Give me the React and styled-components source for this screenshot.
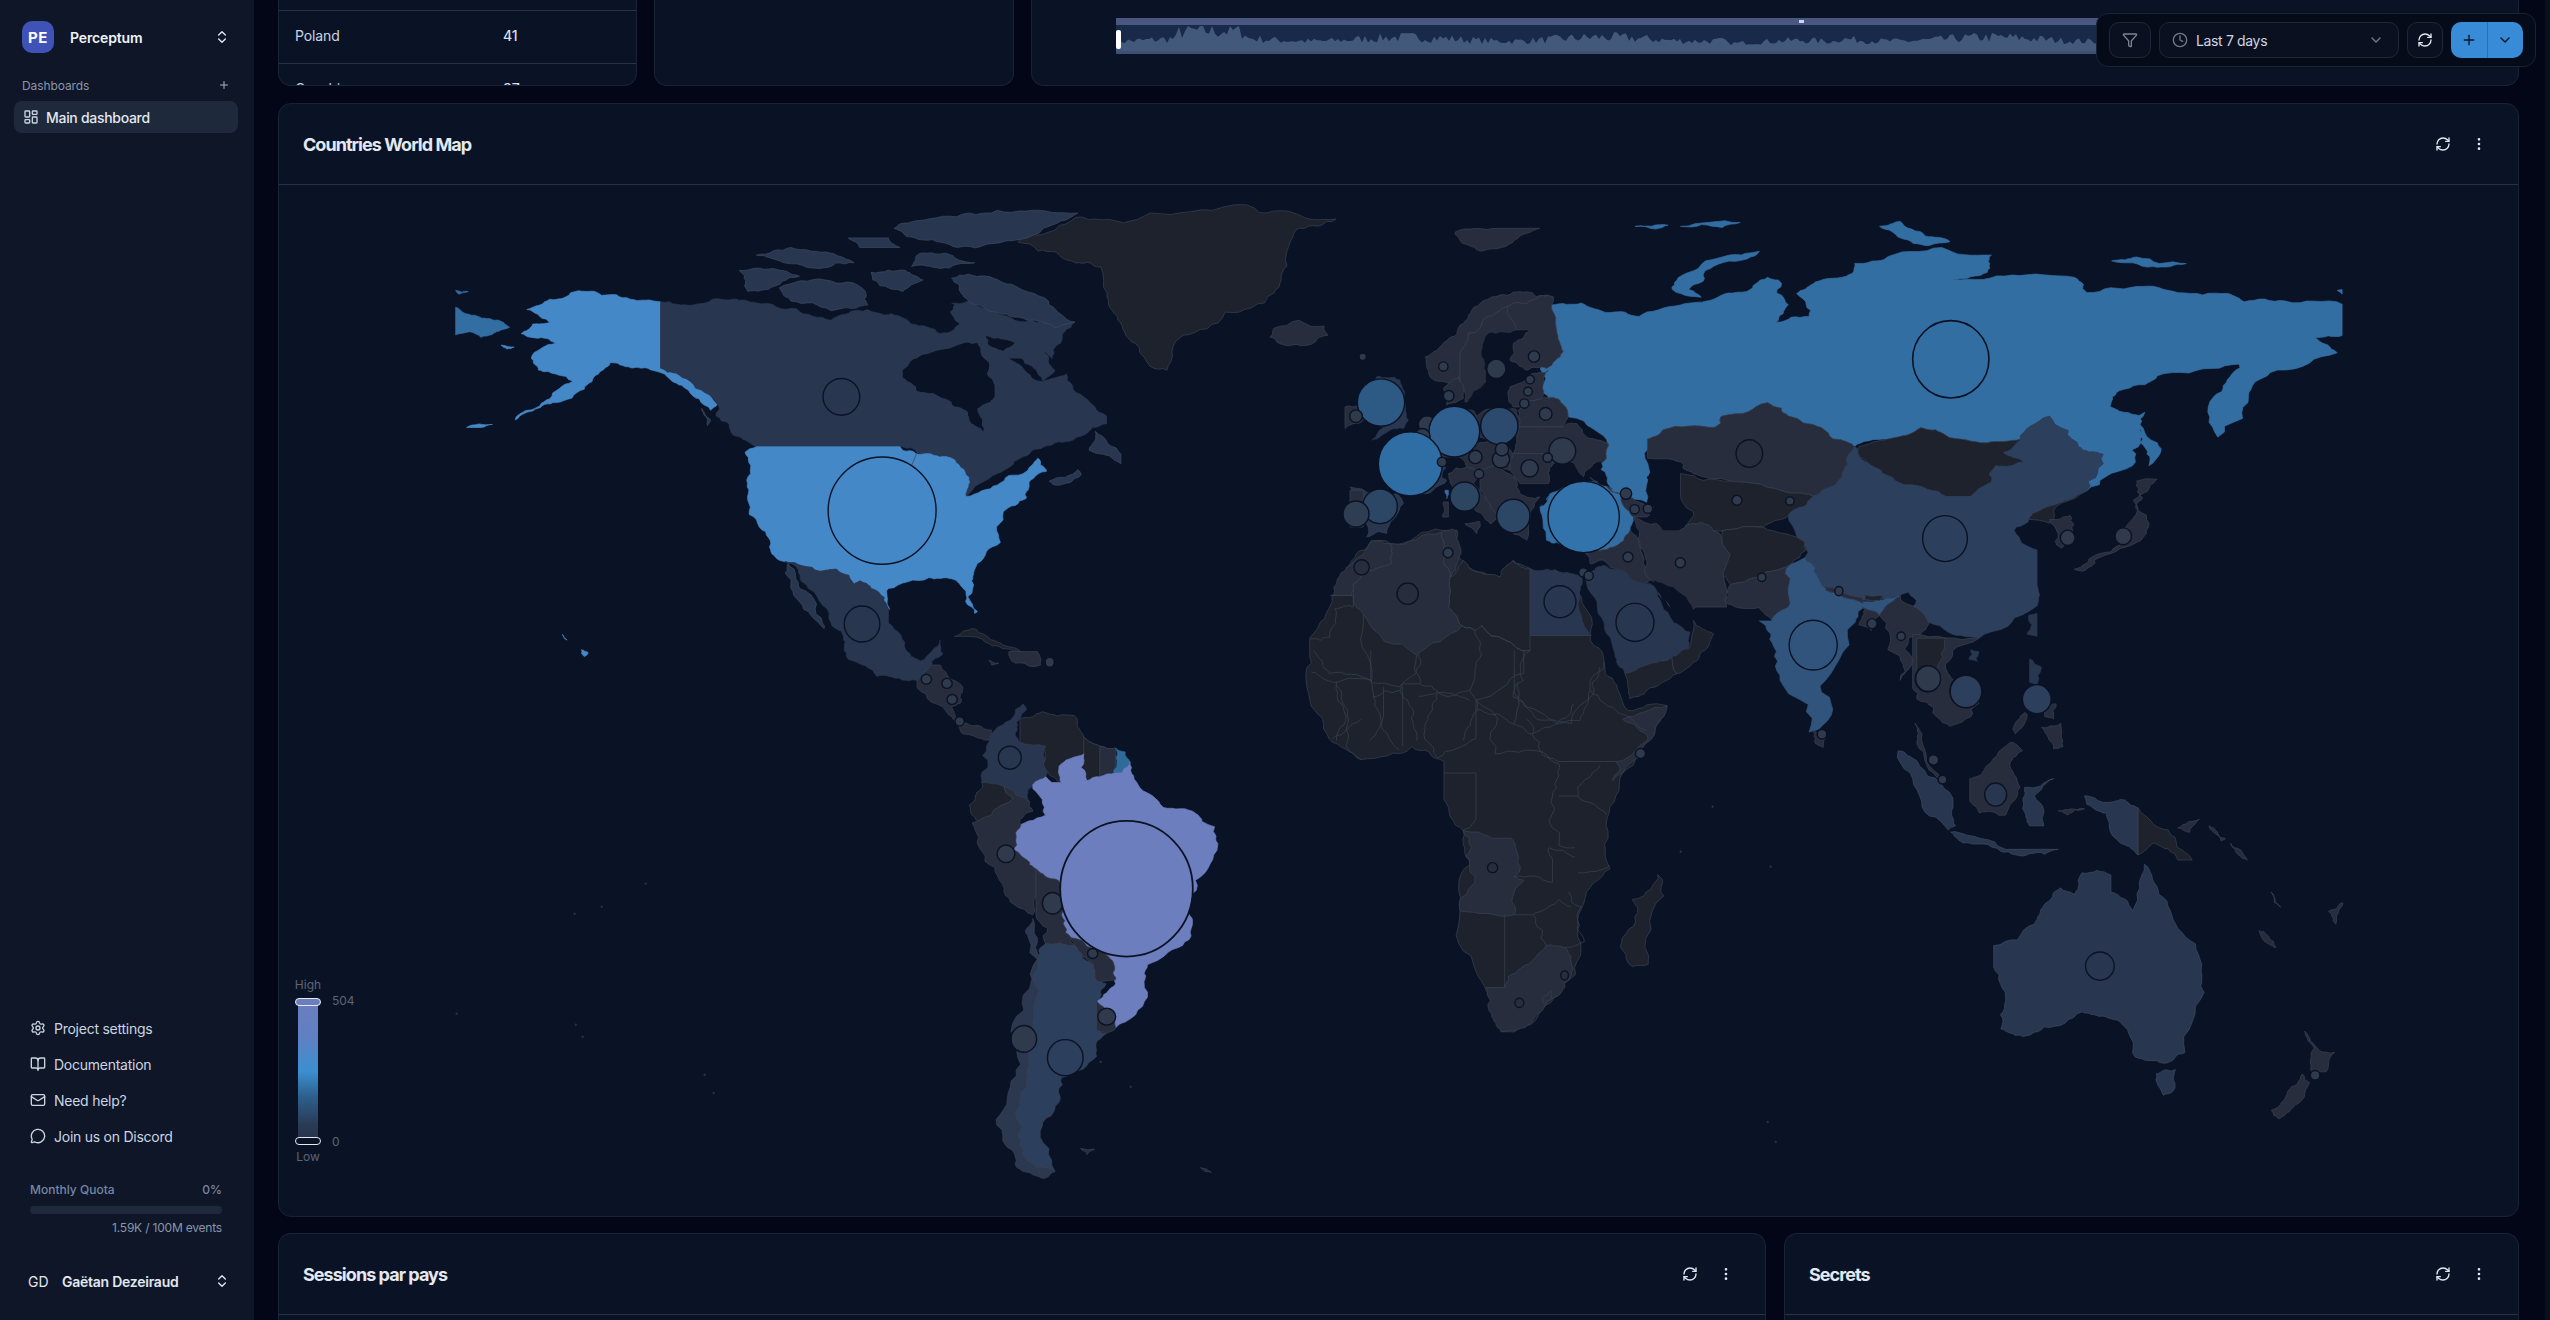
import React from 'react';
import styled, { createGlobalStyle } from 'styled-components';
import { ChevronsUpDown, Plus, LayoutDashboard, Settings, BookOpen, Mail, MessageCircle, Funnel, Clock, RefreshCw, ChevronDown, EllipsisVertical } from 'lucide-react';

const Global = createGlobalStyle`
  html, body { margin: 0; padding: 0; background: #020617; }
  body { font-family: Inter, "Noto Sans", sans-serif; -webkit-font-smoothing: antialiased; }
  * { box-sizing: border-box; }
`;

const Shell = styled.div`display: flex; width: 100vw; height: 100vh; overflow: hidden; background: #020617; position: relative;`;
const Sidebar = styled.aside`width: 254px; flex: none; background: #0e1628; display: flex; flex-direction: column; color: #e2e8f0;`;
const Brand = styled.div`display: flex; align-items: center; height: 32px; margin: 21px 24px 0 22px; gap: 16px;`;
const Logo = styled.div`width: 32px; height: 32px; border-radius: 10px; background: #3f52b8; color: #fff; font-weight: 700; font-size: 15px; display: flex; align-items: center; justify-content: center; letter-spacing: .5px;`;
const BrandName = styled.div`flex: 1; font-size: 14px; font-weight: 600; color: #eef2f7; letter-spacing: -.15px;`;
const SectionHead = styled.div`display: flex; align-items: center; justify-content: space-between; margin: 24px 24px 0 22px; height: 16px; font-size: 12px; color: #8b95a7; letter-spacing: -.1px;`;
const NavActive = styled.div`display: flex; align-items: center; gap: 7px; margin: 8px 16px 0 14px; height: 32px; padding-left: 9px; border-radius: 8px; background: #1e293b; font-size: 14px; font-weight: 500; color: #e2e8f0; letter-spacing: -.3px;`;
const Spacer = styled.div`flex: 1;`;
const NavLink = styled.div`display: flex; align-items: center; gap: 8px; height: 36px; padding-left: 30px; font-size: 14px; color: #cbd5e1; letter-spacing: -.25px;`;
const Quota = styled.div`margin: 28px 32px 0 30px;`;
const QuotaTop = styled.div`display: flex; justify-content: space-between; font-size: 12px; line-height: 16px; font-weight: 500; color: #7686a3;`;
const QuotaTrack = styled.div`height: 8px; border-radius: 4px; background: #1e293b; margin-top: 8px;`;
const QuotaFoot = styled.div`text-align: right; font-size: 12px; line-height: 16px; margin-top: 6px; color: #8796ad; letter-spacing: -.2px;`;
const User = styled.div`display: flex; align-items: center; height: 20px; margin: 35px 24px 29px 28px;`;
const Initials = styled.div`width: 34px; font-size: 14px; color: #e2e8f0;`;
const UserName = styled.div`flex: 1; font-size: 14px; font-weight: 600; color: #e2e8f0; letter-spacing: -.25px;`;

const Main = styled.main`flex: 1; min-width: 0; display: flex; flex-direction: column; padding: 0 26px 0 24px; overflow: hidden;`;
const Scrollbar = styled.div`width: 5px; flex: none; background: #0a0f1e;`;
const TopRow = styled.div`flex: none; height: 86px; margin-bottom: 17px; display: grid; grid-template-columns: 359px 360px 1fr; gap: 17px;`;
const TopCard = styled.section`background: #0a1326; border: 1px solid #1a2336; border-top: 0; border-radius: 0 0 13px 13px; overflow: hidden; position: relative;`;
const TableWrap = styled.div`padding-top: 10px;`;
const TableRow = styled.div`display: grid; grid-template-columns: 208px 1fr; align-items: center; height: 53px; padding: 0 0 3px 16px; border-top: 1px solid #293246; font-size: 14px; color: #cbd5e1; letter-spacing: -.1px;`;
const Value = styled.span`font-weight: 500; color: #d7deea;`;
const BrushArea = styled.div`position: absolute; left: 84px; right: 38px; top: 18px; height: 36px;`;
const BrushStrip = styled.div`height: 7px; background: #4a5780; position: relative;`;
const BrushGrip = styled.div`position: absolute; left: 683px; top: 2px; width: 5px; height: 3px; background: #cdd5e6;`;
const BrushPlot = styled.svg`display: block; width: 100%; height: 29px;`;
const BrushHandle = styled.div`position: absolute; left: 0; top: 12px; width: 5px; height: 19px; border-radius: 2px; background: #fff;`;

const Card = styled.section`background: #0a1326; border: 1px solid #1a2336; border-radius: 13px; display: flex; flex-direction: column; overflow: hidden;`;
const MapCard = styled(Card)`flex: none; height: 1114px; margin-bottom: 16px;`;
const CardHead = styled.header`flex: none; height: 81px; display: flex; align-items: center; padding: 0 23px 0 24px; border-bottom: 1px solid #293246;`;
const CardTitle = styled.h2`flex: 1; margin: 0; font-size: 18px; font-weight: 700; color: #e4e9f1; letter-spacing: -.95px;`;
const IconBtn = styled.button`width: 32px; height: 32px; background: none; border: 0; padding: 0; color: #e2e8f0; display: flex; align-items: center; justify-content: center;`;
const HeadIcons = styled.div`display: flex; gap: 4px;`;
const MapBody = styled.div`flex: 1; position: relative; min-height: 0;`;
const MapSvg = styled.svg`display: block; width: 100%; height: 100%;`;
const BottomRow = styled.div`flex: 1; min-height: 0; display: grid; grid-template-columns: 1488px 1fr; gap: 18px;`;
const BottomCard = styled(Card)`border-bottom: 0; border-radius: 13px 13px 0 0;`;
const LegendRow = styled.div`display: flex; height: 20px; padding: 5px 0 0 354px;`;
const LegendDot = styled.span`width: 9px; height: 9px; border-radius: 50%; flex: none; margin-left: ${p => p.$gap}px; background: ${p => p.$c};`;

const Legend = styled.div`position: absolute; left: 16px; top: 793px; width: 26px; display: flex; flex-direction: column; align-items: center;`;
const LegendLabel = styled.div`font-size: 12px; line-height: 14px; color: #5c6576;`;
const LegendBar = styled.div`position: relative; width: 20px; height: 141px; margin: 9px 0 8px; background: linear-gradient(to bottom, #6d7ebf 0%, #5f80c2 25%, #3b8fd0 50%, #2d5f8c 68%, #2a3a55 88%, #28324a 100%);`;
const LegendHandle = styled.div`position: absolute; left: -3px; width: 26px; height: 8px; border-radius: 4px; border: 1.5px solid #e5e9f0; background: ${p => p.$fill}; ${p => p.$end}: -3px;`;
const LegendValue = styled.div`position: absolute; left: 34px; font-size: 12px; line-height: 14px; color: #5c6576; ${p => p.$end}: -7px;`;

const Toolbar = styled.div`position: absolute; left: 2096px; top: 13px; width: 440px; height: 54px; padding: 8px 12px; display: flex; gap: 8px; background: #060b1a; border: 1px solid #1a2234; border-radius: 12px;`;
const ToolBtn = styled.div`width: ${p => p.$w}px; height: 36px; flex: none; border: 1px solid #1e2638; border-radius: 10px; background: #0a1020; display: flex; align-items: center; justify-content: center; color: ${p => p.$c || '#e2e8f0'};`;
const RangeSelect = styled.div`width: 240px; height: 36px; flex: none; border: 1px solid #1e2638; border-radius: 10px; background: #0a1020; display: flex; align-items: center; gap: 8px; padding: 0 14px 0 12px; font-size: 14px; color: #cfd6e2; letter-spacing: -.35px;`;
const RangeText = styled.span`flex: 1;`;
const Split = styled.div`width: 72px; height: 36px; flex: none; display: flex; border-radius: 10px; overflow: hidden; background: #388bd6; color: #0a1326;`;
const SplitPart = styled.div`flex: 1; display: flex; align-items: center; justify-content: center; & + & { border-left: 1px solid #2a71b3; }`;

const Land = styled.polygon`fill: ${p => p.$f}; stroke: ${p => p.$s || '#3a4252'}; stroke-width: .7; vector-effect: non-scaling-stroke; stroke-linejoin: round;`;
const Water = styled.polygon`fill: #0a1326;`;
const Border = styled.polyline`fill: none; stroke: #3a4252; stroke-width: .7; vector-effect: non-scaling-stroke; stroke-linejoin: round;`;
const Bubble = styled.ellipse`fill: ${p => p.$f}; stroke: #0a1224; stroke-width: ${p => p.$sw || 1.4}; vector-effect: non-scaling-stroke;`;

const DARK = '#1e222c', T1 = '#282d3d', T2 = '#293650', T3 = '#2c3f5c', RU = '#336ea3', US = '#4588c8', BR = '#6d7ebf', S = '#303a4d';

const Z4 = 'translate(280 190) scale(.574 .3827)';
const Z5 = 'translate(1150 190) scale(.829 .3827)';
const Z6 = 'translate(800 650) scale(.6377 .3827)';
const Z7 = 'translate(1800 650) scale(.4783 .4273)';
const Z9 = 'translate(1300 320) scale(.33333)';

// Natural-looking coastlines: midpoint displacement keyed by the edge itself, so
// edges shared by two countries stay shared and exact horizontals/verticals stay straight.
const noise = (a, b, c, d) => {
  const s = Math.sin(a * 12.9898 + b * 78.233 + c * 37.719 + d * 4.581) * 43758.5453;
  return s - Math.floor(s);
};
const split = (x1, y1, x2, y2, depth, out) => {
  const len = Math.hypot(x2 - x1, y2 - y1);
  if (depth === 0 || len < 7) return;
  const flip = x1 > x2 || (x1 === x2 && y1 > y2);
  const [ax, ay, bx, by] = flip ? [x2, y2, x1, y1] : [x1, y1, x2, y2];
  const d = (noise(ax, ay, bx, by) - 0.5) * len * 0.3;
  const mx = (ax + bx) / 2 - ((by - ay) / len) * d;
  const my = (ay + by) / 2 + ((bx - ax) / len) * d;
  split(x1, y1, mx, my, depth - 1, out);
  out.push(`${mx.toFixed(1)},${my.toFixed(1)}`);
  split(mx, my, x2, y2, depth - 1, out);
};
const rough = (str, closed = true) => {
  const pts = str.split(' ').map(p => p.split(',').map(Number));
  const out = [];
  pts.forEach((p, i) => {
    out.push(p.join(','));
    const q = pts[i + 1] || (closed ? pts[0] : null);
    if (!q || p[0] === q[0] || p[1] === q[1]) return;
    split(p[0], p[1], q[0], q[1], 3, out);
  });
  return out.join(' ');
};

const greenland = '1018,242 1049,232 1095,219 1150,213 1233,205 1287,211 1336,219 1299,228 1291,240 1287,266 1274,293 1225,312 1183,335 1167,370 1150,366 1147,362 1135,343 1118,320 1107,293 1101,267 1072,261 1038,251';
const africa = '1307,687 1310,637 1332,595 1347,568 1370,542 1390,543 1442,530 1457,530 1460,558 1500,577 1513,560 1530,568 1582,577 1578,592 1590,635 1605,673 1622,700 1628,710 1667,705 1654,734 1623,772 1607,818 1610,868 1584,902 1581,948 1559,994 1527,1025 1501,1031 1492,1014 1476,971 1460,910 1470,864 1463,830 1444,799 1444,761 1412,746 1361,759 1329,738 1310,700';

const z4Lands = [
  [RU, RU, '306,306 345,330 375,340 400,358 375,372 350,385 330,370 306,378'],
  [RU, RU, '306,262 328,265 312,272'],
  [US, US, '430,312 470,285 520,263 560,275 610,285 663,292 663,465 690,478 715,500 745,530 762,560 750,575 730,545 700,510 670,480 630,465 600,460 575,450 555,480 530,520 480,555 445,572 410,600 430,575 470,545 510,500 480,480 450,470 440,430 480,400 455,385 420,375 440,350 470,345 450,325'],
  [US, US, '385,405 408,410 395,415'], [US, US, '325,620 370,612 350,620'], [US, US, '525,1200 537,1208 530,1218'], [US, US, '492,1160 500,1175 495,1170'],
  [T2, T2, '663,292 720,300 790,285 830,295 900,310 960,340 1000,315 1060,320 1100,350 1150,375 1185,350 1165,300 1200,290 1240,315 1280,340 1330,345 1385,345 1360,400 1345,440 1330,420 1350,470 1330,500 1370,480 1400,540 1440,590 1440,610 1400,640 1350,660 1310,680 1290,700 1250,740 1195,800 1200,750 1170,700 1110,685 1080,670 830,670 790,640 760,590 762,560 715,500 690,478 663,465'],
  [T2, '#3c4a60', '1170,230 1230,225 1280,250 1340,300 1385,345 1350,360 1310,340 1250,320 1200,290 1185,265'],
  [T2, '#3c4a60', '870,255 950,235 1020,265 1025,305 960,315 890,290'],
  [T2, '#3c4a60', '800,210 860,205 905,225 850,260 815,265'],
  [T2, '#3c4a60', '1110,80 1200,60 1300,55 1390,60 1330,100 1240,140 1180,150 1120,130 1070,100'],
  [T2, '#3c4a60', '1110,170 1160,165 1210,190 1150,205 1100,200'],
  [T2, '#3c4a60', '830,170 890,150 960,165 1000,190 940,205 860,180'],
  [T2, '#3c4a60', '990,125 1060,125 1080,150 1010,150'],
  [T2, '#3c4a60', '1030,215 1090,210 1120,235 1085,265 1045,250'],
  [T2, '#3c4a60', '1420,630 1465,690 1465,715 1435,690 1410,680'],
  [T2, '#3c4a60', '1340,760 1390,730 1395,745 1350,770'],
  [T2, '#3c4a60', '735,570 750,600 745,615'],
  [US, US, '830,670 1080,670 1085,680 1130,688 1170,700 1200,750 1195,800 1250,770 1300,735 1320,700 1335,735 1305,770 1300,805 1260,840 1255,920 1215,975 1205,1020 1215,1100 1210,1105 1190,1040 1170,1015 1130,1012 1060,1040 1062,1095 1030,1040 1010,1020 1000,1030 970,990 940,995 880,970 855,940 835,880 815,810 820,740 810,685'],
  [T2, T2, '880,970 940,995 970,990 1000,1030 1010,1020 1030,1040 1060,1095 1060,1130 1090,1200 1115,1230 1150,1175 1155,1210 1135,1240 1110,1280 1080,1275 1040,1270 990,1225 985,1180 960,1130 920,1040 900,985'],
  [T2, '#3c4a60', '885,975 905,1040 945,1130 948,1145 905,1075 880,1000'],
  [T1, null, '1110,1280 1135,1240 1150,1240 1165,1275 1190,1300 1185,1340 1170,1350 1190,1390 1240,1410 1245,1440 1215,1430 1190,1420 1165,1370 1110,1300'],
  [DARK, null, '1175,1165 1210,1145 1250,1180 1290,1205 1240,1190 1200,1165'],
  [T1, null, '1270,1205 1320,1205 1325,1240 1280,1235'],
  [T1, null, '1235,1228 1252,1235 1240,1240'],
];
const z4Water = [
  '1085,470 1120,430 1180,405 1215,400 1235,450 1245,510 1245,540 1225,560 1215,570 1225,630 1205,610 1195,575 1160,545 1110,525 1085,490',
  '1270,440 1310,490 1330,500 1310,460 1290,440', '1230,380 1260,390 1280,400 1260,420 1235,405',
  '1100,260 1150,290 1175,300 1165,320 1120,310', '960,325 1040,300 1090,310 1060,325 1000,310',
];
const z4Bubbles = [[978, 540, 32, 48, T2], [1049, 837, 94, 140, US], [1014, 1133, 31, 47, T2], [1126, 1277, 9, 13, S], [1162, 1288, 9, 13, S], [1171, 1330, 9, 13, S], [1184, 1387, 8, 12, S], [1341, 1233, 8, 13, S, 0]];

const z6Lands = [
  [T2, T2, '295,300 310,200 350,140 355,155 340,200 345,240 385,250 390,300 385,330 365,350 360,395 320,355 285,345'],
  [DARK, null, '345,180 380,160 430,170 445,225 470,250 445,270 415,290 410,345 390,320 385,250 345,240'],
  [DARK, null, '445,225 470,250 495,255 495,320 470,330 450,340 445,270'],
  [T1, null, '470,250 495,255 495,320 470,330'],
  ['#2f6a9a', '#2f6a9a', '495,255 510,265 517,290 505,320 492,320'],
  [BR, BR, '365,350 385,330 395,345 410,345 415,290 445,270 450,340 470,330 495,320 505,320 517,290 530,350 570,410 620,425 650,460 655,510 620,600 615,700 600,770 545,820 540,880 510,970 495,985 465,915 495,870 490,810 460,780 425,750 410,690 405,600 370,570 360,560 335,520 340,470 385,430'],
  [DARK, null, '275,380 285,345 320,355 335,385 300,430 285,450 270,430'],
  [T1, null, '270,450 300,430 335,385 320,355 360,395 365,420 340,470 335,520 360,560 370,570 370,640 365,690 320,630 290,550'],
  [T1, null, '370,570 405,600 410,690 425,750 430,770 385,765 370,690'],
  [T1, null, '425,750 460,780 490,810 495,860 465,865 460,820 430,775'],
  [T3, null, '385,765 430,770 460,820 465,865 480,870 465,915 465,985 480,1000 465,1060 410,1115 400,1190 380,1240 400,1360 370,1350 345,1290 340,1200 355,1100 365,980 375,800'],
  ['#2b3850', null, '365,700 375,800 365,980 355,1100 340,1200 345,1290 370,1350 400,1360 380,1378 340,1350 318,1280 325,1170 340,1050 350,900 358,750'],
  [T1, null, '465,915 495,985 480,1000 465,990'],
  [T1, null, '440,1300 462,1302 450,1316'], [T1, null, '628,1350 645,1362 635,1360'],
  [T1, null, '1040,470 1085,490 1115,490 1120,590 1135,600 1120,690 1035,680 1050,560'],
  [T1, null, '1075,880 1105,880 1130,830 1170,770 1200,775 1210,840 1190,900 1140,980 1100,995 1085,950'],
  [T1, null, '1360,145 1340,220 1290,320 1275,340 1280,290 1330,230 1290,180'],
  [DARK, null, '1345,585 1355,640 1330,820 1305,825 1295,740 1305,650'],
  [T1, null, '1165,905 1178,890 1178,910 1168,922'],
];
const z6Borders = [
  '805,0 830,60 895,80 895,0', '895,80 940,95 970,15 965,0', '1135,0 1135,60 1060,130 1060,230 1000,280', '1050,130 1010,110 970,120',
  '1120,0 1120,110 1165,165 1210,190 1245,100 1260,30', '1140,180 1160,260 1190,290 1250,290 1280,290', '1090,270 1165,265 1190,295 1180,380 1190,510 1215,515',
  '1010,320 1060,320 1060,440 1040,470', '1220,380 1265,430', '1190,380 1220,380 1255,300', '1220,580 1270,560', '1120,590 1180,605 1180,545 1175,515 1215,540',
  '1120,690 1150,690 1190,650 1210,670', '1105,690 1105,880', '1150,690 1170,770', '1205,630 1225,670', '915,95 915,170 940,260', '945,95 945,250', '840,90 860,180 880,285',
  '1000,110 985,180 1000,280', '880,180 835,230', '1225,670 1230,760 1200,775', '1060,130 1090,270',
];
const z6Bubbles = [[329, 280, 18, 30, T2], [323, 531, 14, 23, S], [396, 660, 16, 28, S], [459, 791, 8, 13, S], [512, 622, 104, 177, BR, 1.8], [481, 956, 14, 22, S], [351, 1014, 20, 35, S], [416, 1063, 28, 47, T3], [1318, 269, 8, 13, S], [1086, 567, 8, 13, T1], [1128, 920, 7, 12, T1], [1199, 848, 6, 12, T1]];

const z5Lands = [
  [RU, RU, '480,430 485,300 520,295 555,320 590,330 640,300 680,285 720,265 745,228 758,235 770,300 755,345 795,330 780,270 800,245 840,225 850,192 885,182 955,150 1015,170 1010,215 968,232 1040,222 1115,228 1130,268 1190,252 1240,268 1300,270 1320,292 1370,290 1438,298 1438,380 1405,385 1432,425 1360,470 1325,540 1288,645 1283,540 1305,480 1340,420 1290,465 1215,485 1175,520 1158,565 1195,590 1200,640 1185,720 1130,785 1150,690 1120,670 1085,590 1050,650 1010,660 960,640 930,620 890,650 850,670 810,620 770,590 745,555 690,590 680,620 620,625 600,650 597,700 599,815 555,775 545,714 552,662 504,592 475,530'],
  [RU, RU, '1200,580 1215,660 1205,720 1195,660'],
  [RU, RU, '630,260 650,215 690,175 735,160 720,180 670,210 650,260 665,280 640,270'],
  [RU, RU, '880,95 905,82 935,120 965,135 940,145 905,125'],
  [RU, RU, '1160,185 1190,175 1250,192 1210,200'], [RU, RU, '585,95 625,92 610,102'], [RU, RU, '640,95 712,85 690,98'], [RU, RU, '1432,262 1438,260 1438,272'],
  [T1, null, '368,110 420,100 470,100 440,130 400,160 375,135'],
  [T1, null, '600,650 620,625 680,620 690,590 745,555 770,590 810,620 850,670 830,760 800,800 770,790 700,760 655,740 640,710 600,700'],
  [DARK, null, '640,740 700,760 770,790 800,800 770,850 740,880 690,890 650,880 640,800'],
  [DARK, null, '855,670 890,650 930,620 960,640 1010,660 1050,650 1030,685 1055,710 1020,720 990,800 960,800 910,770 870,720'],
  [T3, T3, '850,670 870,720 910,770 960,800 990,800 1020,720 1055,710 1030,685 1050,650 1085,590 1120,670 1150,690 1130,785 1085,825 1060,860 1045,880 1070,940 1070,1030 1060,1100 1000,1170 960,1150 920,1110 915,1050 860,1070 810,1030 790,960 770,850 800,800 830,760'],
  [DARK, null, '690,890 740,880 790,920 760,990 700,1030 690,1000'],
  [T1, null, '700,1030 760,990 795,960 770,1050 750,1125 735,1090 690,1080'],
  [DARK, null, '1085,825 1130,785 1090,860 1085,870 1060,860'],
  [T1, null, '1085,860 1110,850 1115,900 1100,935'],
  ['#31547d', '#31547d', '790,960 810,1030 860,1075 905,1060 880,1110 860,1090 850,1130 815,1280 810,1400 795,1415 760,1280 750,1180 735,1125 750,1125 770,1050'],
  [T1, null, '810,1030 860,1065 860,1080 815,1045'],
  [DARK, null, '860,1055 885,1060 880,1072 862,1070'],
  [T1, null, '860,1090 880,1110 870,1150 855,1135'],
  [T1, null, '905,1060 940,1130 915,1170 905,1280 890,1200 880,1110'],
  [T1, null, '920,1160 1000,1170 960,1250 1000,1340 965,1400 945,1350 920,1300'],
  [DARK, null, '925,1170 960,1170 950,1250 925,1260'],
  [T1, null, '800,1410 815,1430 812,1455 802,1440'],
  [T1, null, '1115,990 1135,960 1175,920 1190,820 1195,790 1205,870 1190,920 1140,965 1125,995'],
  [T1, null, '1190,760 1215,755 1195,795'],
  [T2, T2, '1060,1110 1070,1105 1070,1165 1058,1160'],
  [T2, T2, '990,1200 1000,1205 998,1230 988,1225'],
];
const z5Bubbles = [[723, 688, 16, 36, T1], [708, 810, 6, 13, S], [772, 812, 5, 11, S], [966, 442, 46, 101, RU, 1.6], [959, 910, 27, 60, T3], [1107, 908, 9, 20, S], [1174, 904, 10, 22, S], [800, 1188, 29, 65, '#31547d'], [738, 1011, 5, 11, S], [831, 1047, 5, 12, S], [871, 1132, 6, 13, S], [906, 1165, 5, 11, S], [938, 1276, 15, 34, S], [984, 1308, 19, 43, T3], [1070, 1330, 16, 37, T3], [810, 1421, 5, 11, S], [944, 1490, 5, 11, S], [955, 1540, 4, 10, S]];

const z7Lands = [
  [T2, T2, '480,20 505,40 495,80 480,75'], [T1, null, '505,180 545,170 550,225 530,230'], [T1, null, '445,185 470,145 475,150 450,195'], [T1, null, '510,130 535,125 530,160 512,155'],
  [T1, null, '240,170 255,195 290,290 300,310 285,295 245,220'],
  [T1, null, '355,300 385,280 440,215 465,235 440,260 460,320 430,385 375,380 355,350'],
  [T2, '#3c4a60', '205,235 250,270 320,360 325,410 310,420 250,340'],
  [T2, '#3c4a60', '315,425 380,440 430,465 540,465 480,475 420,470 340,450'],
  [T2, '#3c4a60', '470,320 530,300 490,340 510,410 480,410 465,370'],
  [T2, '#3c4a60', '595,340 640,355 680,350 707,368 707,478 680,455 640,380 600,360'],
  [DARK, null, '707,368 770,420 820,490 790,490 740,450 707,478'],
  [T2, '#3c4a60', '405,690 490,640 510,595 545,555 575,570 590,520 650,525 650,565 695,610 720,500 750,570 790,650 840,735 845,800 805,940 760,965 700,950 670,870 630,855 590,845 510,880 450,900 420,885 430,820 405,740'],
  [T2, '#3c4a60', '745,990 785,980 780,1030 760,1040'],
  [T1, null, '1055,890 1085,935 1118,940 1100,985 1070,985 1075,930'],
  [T1, null, '1050,990 1065,1010 1030,1070 1000,1095 985,1075 1020,1030'],
  [T1, null, '960,655 990,680 995,695 965,670'], [T1, null, '855,410 890,440 880,445'], [T1, null, '900,450 935,490 920,480'], [T1, null, '985,565 1005,600 992,590'], [T1, null, '1105,610 1135,590 1120,640'], [T1, null, '790,415 835,395 815,425'], [T1, null, '540,375 595,370 560,385'],
];
const z7Bubbles = [[409, 337, 23, 27, T2], [627, 738, 30, 33, T2], [1077, 993, 10, 11, S], [298, 302, 9, 10, S], [279, 256, 11, 12, S], [46, 196, 10, 11, S], [268, 66, 26, 30, S], [347, 96, 33, 38, T3], [495, 114, 30, 34, T3]];

const z9Lands = [
  [T1, null, '376,110 440,62 490,10 540,-50 600,-75 680,-85 745,-75 700,-60 620,-40 560,-10 505,40 480,110 480,190 430,185 390,170 380,140'],
  [T1, null, '505,40 560,-10 620,-40 660,30 590,90 560,130 555,190 520,235 495,245 480,190 480,110'],
  [T1, null, '620,-40 700,-60 760,-70 770,30 790,95 740,145 680,150 630,120 640,70 690,30 650,30'],
  [T1, null, '430,205 475,170 490,235 440,255'],
  [T1, null, '630,200 690,165 745,150 730,190 725,235 670,260 640,260 625,230'],
  [T1, null, '670,260 725,235 780,240 805,290 790,320 725,320 650,320 655,270'],
  [T1, null, '650,320 790,320 830,310 860,350 925,370 915,420 880,430 850,470 800,420 760,430 720,400 640,400 650,360'],
  [T1, null, '520,290 610,265 650,270 655,340 620,375 540,350'],
  [T1, null, '450,260 520,270 530,370 480,410 430,410 400,330'],
  [T2, null, '240,420 330,340 400,350 435,415 425,470 440,480 380,520 300,520'],
  [T2, null, '150,500 290,520 310,550 260,640 200,650 190,590'],
  [T1, null, '150,510 190,510 190,620 150,620'],
  [T1, null, '445,460 500,440 540,450 520,490 580,570 600,590 570,610 520,560 480,530 450,480'],
  [T1, null, '495,610 540,605 530,640'], [T1, null, '430,545 445,545 445,590 428,590'], [RU, RU, '435,510 445,510 440,535'],
  [T1, null, '540,450 590,430 650,480 660,520 720,530 690,590 680,660 640,640 600,590 540,510'],
  [T1, null, '640,400 720,400 760,430 745,490 660,490 630,450'],
  [T1, null, '530,370 620,375 640,400 630,450 590,430 540,450 500,440 480,410'],
  [T2, T2, '230,170 300,180 315,250 325,300 310,325 240,350 215,360 250,320 240,300 220,240'],
  [T1, null, '135,260 180,250 190,300 135,325'],
  [T1, null, '-78,24 72,18 84,45 -27,75 -90,51'],
  [RU, RU, '720,560 750,520 850,490 960,520 1000,590 990,630 940,680 860,700 800,670 740,660'],
  [T1, null, '870,470 930,510 990,530 1060,560 1040,590 1000,590 960,520'],
  [T1, null, '860,700 940,680 990,630 1020,680 1060,770 1030,790 960,750 910,720 870,730'],
  [T2, T2, '860,790 855,765 910,735 960,750 1030,790 1050,790 1110,890 1170,935 1165,985 1115,1010 1020,1040 975,1060 945,1000 895,880'],
  [DARK, null, '975,1060 1020,1040 1115,1010 1130,1060 1040,1110 990,1135'],
  [DARK, null, '1115,1010 1165,985 1180,900 1240,940 1200,1000 1130,1060'],
  [T1, null, '1000,590 1140,630 1180,610 1260,640 1290,700 1280,860 1190,860 1170,880 1110,860 1070,790 1040,770 1020,680'],
  [T2, T2, '690,745 790,760 845,770 838,815 872,945 690,945'],
  [DARK, null, '450,770 490,720 600,770 640,720 690,745 690,990 545,915 525,930 485,915 445,860'],
  [T1, null, '425,635 470,630 475,720 450,770 430,700'],
  [T1, null, '270,670 425,635 430,700 450,770 445,860 485,915 350,1005 190,880 160,840 160,790 240,740 275,730'],
  [T1, null, '215,660 270,670 275,730 240,740 160,790 155,825 100,825 140,740 190,700'],
];
const z9Borders = [
  '90,825 160,825 160,860 105,865 90,950 30,955', '190,880 215,1080 110,1085 50,1060 35,1055', '350,1005 360,1090 310,1090 300,1110 220,1130 215,1080',
  '485,915 525,930 545,1000 510,1110 420,1120 360,1090', '545,915 690,990 675,1000 670,1080 650,1090 640,1210 590,1180 530,1170 510,1110', '690,945 875,945',
  '900,1040 870,1110 840,1200 770,1210 690,1170 640,1130 650,1090', '110,1085 130,1160 110,1260', '220,1130 240,1180 210,1260', '300,1110 340,1170 350,1260', '530,1170 490,1260',
  '640,1210 690,1240 770,1210 820,1150', '960,1180 1040,1230', '870,1110 960,1180',
];
const z9Water = [
  '1040,470 1080,430 1125,425 1100,460 1060,490 1075,540 1130,560 1140,630 1090,630 1065,590 1075,540',
  '740,530 760,450 800,420 850,470 885,430 905,425 880,455 930,500 870,465 780,500',
  '720,560 750,525 740,545', '1060,780 1090,790 1180,870 1150,900 1110,860 1070,810',
  '565,40 650,30 690,30 640,60 610,115 580,200 530,240 500,260 560,185 555,130',
  '505,255 560,245 620,255 520,270',
];
const z9Bubbles = [[188, 110, 11, S, 0], [430, 139, 14, S], [702, 109, 17, S], [589, 146, 29, S], [690, 178, 13, S], [684, 214, 13, S], [673, 250, 14, S], [737, 281, 19, S], [446, 227, 16, S], [243, 247, 71, '#2c5a85'], [168, 288, 19, S], [381, 313, 26, S], [463, 334, 76, '#2e5f8e'], [367, 348, 23, S], [598, 317, 56, '#2b4a6e'], [603, 417, 26, S], [606, 387, 20, S], [526, 410, 20, S], [331, 431, 96, '#2f6ea5'], [426, 425, 14, S], [537, 461, 14, S], [787, 392, 40, S], [743, 412, 14, S], [689, 444, 26, S], [494, 529, 44, '#2c4560'], [640, 587, 50, '#2c4766'], [240, 558, 52, '#2c4766'], [168, 581, 39, '#2f3d52'], [851, 590, 107, '#3373ab'], [978, 520, 17, S], [1004, 567, 14, S], [1044, 565, 14, S], [185, 741, 23, T1], [444, 697, 15, S], [323, 820, 32, T1], [780, 844, 48, T2], [850, 756, 14, S], [866, 766, 14, S], [984, 710, 15, S], [1141, 727, 15, S], [1005, 906, 57, T2]];

const specks = [[575, 1023], [582, 1035], [704, 1073], [713, 1091], [645, 882], [601, 905], [574, 912], [456, 1012], [1133, 1240], [1130, 1085], [1100, 1060], [1680, 850], [1712, 805], [1775, 1140], [1767, 1120], [1770, 865]];

const lands = list => list.map((l, i) => <Land key={i} $f={l[0]} $s={l[1]} points={rough(l[2])} />);
const waters = list => list.map((w, i) => <Water key={i} points={rough(w)} />);
const borders = list => list.map((b, i) => <Border key={i} points={rough(b, false)} />);
const bubbles = list => list.map((b, i) => <Bubble key={i} cx={b[0]} cy={b[1]} rx={b[2]} ry={b[3]} $f={b[4]} $sw={b[5]} />);

function WorldMap() {
  return (
    <MapSvg viewBox="279 185 2239 1030" preserveAspectRatio="none">
      <Land $f={DARK} points={rough(greenland)} />
      <g transform={Z4}>
        {lands(z4Lands)}
        {waters(z4Water)}
        <Border points="1110,685 1100,720 1110,740" />
      </g>
      <Land $f={DARK} points={rough(africa)} />
      <g transform={Z6}>
        {lands(z6Lands)}
        {borders(z6Borders)}
      </g>
      <g transform={Z5}>{lands(z5Lands)}</g>
      <g transform={Z7}>{lands(z7Lands)}</g>
      <g transform={Z9}>
        {lands(z9Lands)}
        {waters(z9Water)}
        {borders(z9Borders)}
      </g>
      {specks.map((p, i) => <Land key={i} $f="#2a3345" $s="#2a3345" points={`${p[0]},${p[1]} ${p[0] + 2},${p[1] + 1} ${p[0]},${p[1] + 2}`} />)}
      <g transform={Z4}>{bubbles(z4Bubbles)}</g>
      <g transform={Z6}>{bubbles(z6Bubbles)}</g>
      <g transform={Z5}>{bubbles(z5Bubbles)}</g>
      <g transform={Z7}>{bubbles(z7Bubbles)}</g>
      <g transform={Z9}>{z9Bubbles.map((b, i) => <Bubble key={i} cx={b[0]} cy={b[1]} rx={b[2]} ry={b[2]} $f={b[3]} $sw={b[4]} />)}</g>
    </MapSvg>
  );
}

const W = 1364;
const area = (() => {
  let seed = 7;
  const rnd = () => (seed = (seed * 16807) % 2147483647) / 2147483647;
  const pts = [`0,29`];
  for (let x = 0; x <= W; x += 3) {
    const env = 0.45 + 0.3 * Math.sin(x / 62) ** 2 + (x > 60 && x < 130 ? 0.5 : 0) + (x > 610 && x < 720 ? -0.25 : 0);
    const h = 5 + env * (6 + rnd() * 14);
    pts.push(`${x},${Math.max(1, 27 - h).toFixed(1)}`);
  }
  pts.push(`${W},29`);
  return pts.join(' ');
})();

function Brush() {
  return (
    <BrushArea>
      <BrushStrip><BrushGrip /></BrushStrip>
      <BrushPlot viewBox={`0 0 ${W} 29`} preserveAspectRatio="none">
        <rect x="0" y="0" width={W} height="29" fill="#18294a" />
        <polygon points={area} fill="#43597c" />
        <rect x="0" y="26" width={W} height="3" fill="#3f4f72" />
      </BrushPlot>
      <BrushHandle />
    </BrushArea>
  );
}

function HeadActions() {
  return (
    <HeadIcons>
      <IconBtn><RefreshCw size={16} /></IconBtn>
      <IconBtn><EllipsisVertical size={16} /></IconBtn>
    </HeadIcons>
  );
}

const dots = [[0, '#3b82c4'], [61, '#10a37f'], [100, '#f08a24'], [75, '#dc2626'], [118, '#6d3fd6'], [56, '#3b82c4'], [67, '#10a37f'], [54, '#f08a24'], [59, '#dc2626'], [57, '#6d3fd6']];

export default function App() {
  return (
    <Shell>
      <Global />
      <Sidebar>
        <Brand>
          <Logo>PE</Logo>
          <BrandName>Perceptum</BrandName>
          <ChevronsUpDown size={16} color="#e2e8f0" />
        </Brand>
        <SectionHead>Dashboards<Plus size={12} color="#aab3c2" /></SectionHead>
        <NavActive><LayoutDashboard size={16} color="#cbd5e1" />Main dashboard</NavActive>
        <Spacer />
        <NavLink><Settings size={16} />Project settings</NavLink>
        <NavLink><BookOpen size={16} />Documentation</NavLink>
        <NavLink><Mail size={16} />Need help?</NavLink>
        <NavLink><MessageCircle size={16} />Join us on Discord</NavLink>
        <Quota>
          <QuotaTop><span>Monthly Quota</span><span>0%</span></QuotaTop>
          <QuotaTrack />
          <QuotaFoot>1.59K / 100M events</QuotaFoot>
        </Quota>
        <User>
          <Initials>GD</Initials>
          <UserName>Gaëtan Dezeiraud</UserName>
          <ChevronsUpDown size={16} color="#e2e8f0" />
        </User>
      </Sidebar>
      <Main>
        <TopRow>
          <TopCard>
            <TableWrap>
              <TableRow><span>Poland</span><Value>41</Value></TableRow>
              <TableRow><span>Czechia</span><Value>37</Value></TableRow>
            </TableWrap>
          </TopCard>
          <TopCard />
          <TopCard><Brush /></TopCard>
        </TopRow>
        <MapCard>
          <CardHead>
            <CardTitle>Countries World Map</CardTitle>
            <HeadActions />
          </CardHead>
          <MapBody>
            <WorldMap />
            <Legend>
              <LegendLabel>High</LegendLabel>
              <LegendBar>
                <LegendHandle $end="top" $fill="#6d7ebf" />
                <LegendHandle $end="bottom" $fill="#0a1326" />
                <LegendValue $end="top">504</LegendValue>
                <LegendValue $end="bottom">0</LegendValue>
              </LegendBar>
              <LegendLabel>Low</LegendLabel>
            </Legend>
          </MapBody>
        </MapCard>
        <BottomRow>
          <BottomCard>
            <CardHead>
              <CardTitle>Sessions par pays</CardTitle>
              <HeadActions />
            </CardHead>
            <LegendRow>
              {dots.map((d, i) => <LegendDot key={i} $gap={d[0]} $c={d[1]} />)}
            </LegendRow>
          </BottomCard>
          <BottomCard>
            <CardHead>
              <CardTitle>Secrets</CardTitle>
              <HeadActions />
            </CardHead>
          </BottomCard>
        </BottomRow>
      </Main>
      <Scrollbar />
      <Toolbar>
        <ToolBtn $w={42} $c="#7b8494"><Funnel size={16} /></ToolBtn>
        <RangeSelect>
          <Clock size={16} color="#717a8a" />
          <RangeText>Last 7 days</RangeText>
          <ChevronDown size={16} color="#717a8a" />
        </RangeSelect>
        <ToolBtn $w={36}><RefreshCw size={16} /></ToolBtn>
        <Split>
          <SplitPart><Plus size={16} /></SplitPart>
          <SplitPart><ChevronDown size={16} /></SplitPart>
        </Split>
      </Toolbar>
    </Shell>
  );
}
